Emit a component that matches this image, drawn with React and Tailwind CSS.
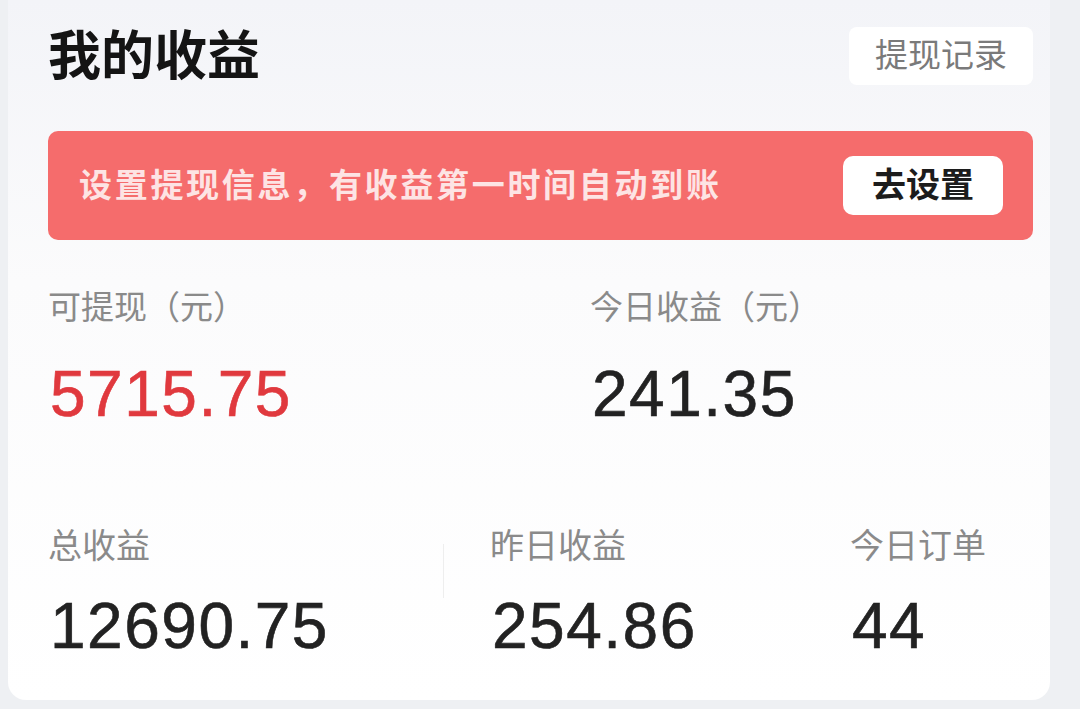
import React from 'react';

const cjk = { fontFamily: '"Liberation Sans", "Noto Sans CJK SC", sans-serif' };

const Stat = ({ label, value, red, className = '', gap = 'mt-[38px]', labelSize = 'text-[32px]' }) => (
  <div className={className}>
    <div className={`${labelSize} leading-none text-[#8a8a8a]`}>{label}</div>
    <div className={`${gap} ml-[2px] text-[64px] leading-none tracking-[1.5px] [-webkit-text-stroke:0.6px_currentColor] ${red ? 'text-[#e0393e]' : 'text-[#222]'}`}>
      {value}
    </div>
  </div>
);

export default function App() {
  return (
    <div className="h-[709px] w-[1080px] overflow-hidden bg-[#eef0f3]" style={cjk}>
      <div className="ml-2 h-[700px] w-[1042px] rounded-b-[18px] bg-gradient-to-b from-[#f3f4f8] via-[#fbfbfc] via-40% to-white pl-[40px] pr-[17px] pt-[27px]">
        {/* header */}
        <div className="flex h-[58px] items-center justify-between">
          <h1 className="text-[53px] font-bold leading-none text-[#141414]">我的收益</h1>
          <button className="flex h-[58px] w-[184px] items-center justify-center rounded-[8px] bg-white text-[33px] text-[#7a7a7a]">
            提现记录
          </button>
        </div>

        {/* banner */}
        <div className="mt-[46px] flex h-[109px] items-center justify-between rounded-[10px] bg-[#f56c6c] pl-[31px] pr-[30px]">
          <span className="text-[33px] font-bold leading-none tracking-[2.7px] text-[#fde4e4]">
            设置提现信息，有收益第一时间自动到账
          </span>
          <button className="flex h-[59px] w-[160px] items-center justify-center rounded-[10px] bg-white text-[34px] font-bold text-[#1c1c1c]">
            去设置
          </button>
        </div>

        {/* today stats */}
        <div className="mt-[51px] flex">
          <Stat className="w-[542px]" label="可提现（元）" value="5715.75" red labelSize="text-[33px]" />
          <Stat label="今日收益（元）" value="241.35" labelSize="text-[33px]" />
        </div>

        {/* totals */}
        <div className="mt-[103px] flex">
          <Stat className="w-[395px]" label="总收益" value="12690.75" gap="mt-[31px]" labelSize="text-[34px]" />
          <div className="mt-[15px] h-[54px] w-px bg-[#eeeeee]" />
          <Stat className="ml-[46px] w-[360px]" label="昨日收益" value="254.86" gap="mt-[31px]" labelSize="text-[34px]" />
          <Stat label="今日订单" value="44" gap="mt-[31px]" labelSize="text-[34px]" />
        </div>
      </div>
    </div>
  );
}
